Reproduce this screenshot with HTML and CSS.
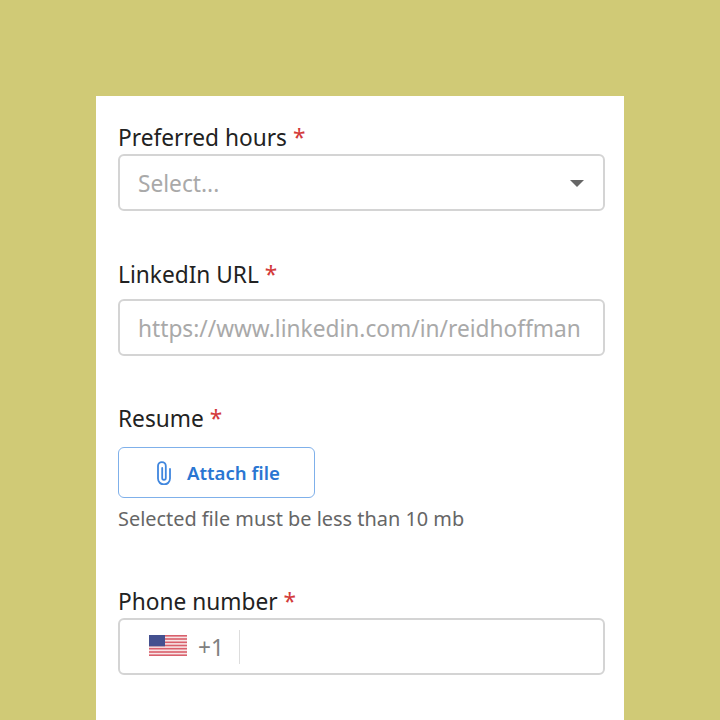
FILE: index.html
```html
<!DOCTYPE html>
<html lang="en">
<head>
<meta charset="UTF-8" />
<meta name="viewport" content="width=device-width, initial-scale=1.0">
<title>Application form</title>
<link rel="stylesheet" href="styles.css">
</head>
<body>
<form class="form-card">
  <div class="field field-hours">
    <div class="field-label">Preferred hours <span class="required">*</span></div>
    <div class="text-box select-box">
      <span class="placeholder">Select...</span>
      <span class="caret"></span>
    </div>
  </div>

  <div class="field field-linkedin">
    <div class="field-label">LinkedIn URL <span class="required">*</span></div>
    <div class="text-box">
      <span class="placeholder">https://www.linkedin.com/in/reidhoffman</span>
    </div>
  </div>

  <div class="field field-resume">
    <div class="field-label">Resume <span class="required">*</span></div>
    <button type="button" class="attach-button">
      <svg class="clip-icon" width="16" height="24" viewBox="0 0 16 24" fill="none" stroke="#3f86de" stroke-width="1.8" stroke-linecap="round">
        <path d="M14 8v9.5a6 6 0 0 1-12 0V5a3.9 3.9 0 0 1 7.8 0v12a1.8 1.8 0 0 1-3.6 0V7"/>
      </svg>
      Attach file
    </button>
    <div class="hint">Selected file must be less than 10 mb</div>
  </div>

  <div class="field field-phone">
    <div class="field-label">Phone number <span class="required">*</span></div>
    <div class="text-box phone-box">
      <svg class="flag" width="38" height="21" viewBox="0 0 38 21">
        <rect width="38" height="21" fill="#f7e4e6"/>
        <g fill="#d9606c">
          <rect y="0" width="38" height="1.6"/>
          <rect y="3.2" width="38" height="1.6"/>
          <rect y="6.5" width="38" height="1.6"/>
          <rect y="9.7" width="38" height="1.6"/>
          <rect y="12.9" width="38" height="1.6"/>
          <rect y="16.2" width="38" height="1.6"/>
          <rect y="19.4" width="38" height="1.6"/>
        </g>
        <rect width="16" height="11.3" fill="#44508f"/>
      </svg>
      <span class="dial-code">+1</span>
      <span class="divider"></span>
    </div>
  </div>
</form>
</body>
</html>
```

FILE: styles.css
```css
body {
  margin: 0;
  height: 720px;
  overflow: hidden;
  background: #d0ca76;
  font-family: 'Noto Sans', 'Open Sans', sans-serif;
  color: #222;
}

.form-card {
  width: 528px;
  height: 624px;
  margin: 96px 0 0 96px;
  padding: 24px 19px 0 22px;
  box-sizing: border-box;
  background: #fff;
}

.field-label {
  font-size: 22.7px;
  line-height: 32px;
  padding-top: 2px;
}

.required {
  color: #d33a3a;
}

.field-hours {
  margin-bottom: 46px;
}

.field-linkedin {
  margin-bottom: 45px;
}

.field-resume {
  margin-bottom: 52px;
}

.field-linkedin .field-label {
  margin-bottom: 8px;
}

.field-resume .field-label {
  margin-bottom: 12px;
}

.text-box {
  height: 57px;
  box-sizing: border-box;
  border: 2px solid #d4d4d4;
  border-radius: 6px;
  display: flex;
  align-items: center;
  padding: 1px 18px 0;
  font-size: 22.7px;
}

.select-box {
  justify-content: space-between;
  padding-right: 19px;
}

.placeholder {
  color: #a9a9a9;
  white-space: nowrap;
}

.caret {
  width: 0;
  height: 0;
  border-left: 7px solid transparent;
  border-right: 7px solid transparent;
  border-top: 7px solid #666;
}

.attach-button {
  width: 197px;
  height: 51px;
  display: flex;
  align-items: center;
  gap: 15px;
  padding: 0 0 0 37px;
  background: #fff;
  border: 1px solid #7fb0ea;
  border-radius: 6px;
  color: #2a76d2;
  font-family: inherit;
  font-size: 18.6px;
  font-weight: 600;
}

.hint {
  margin-top: 8px;
  font-size: 19.9px;
  line-height: 26px;
  color: #666;
}

.phone-box {
  padding: 1px 0 0 29px;
}

.flag {
  margin-bottom: 3px;
}

.dial-code {
  margin-left: 11px;
  color: #808080;
}

.divider {
  width: 1px;
  height: 34px;
  margin-left: 15px;
  background: #ddd;
}
```
